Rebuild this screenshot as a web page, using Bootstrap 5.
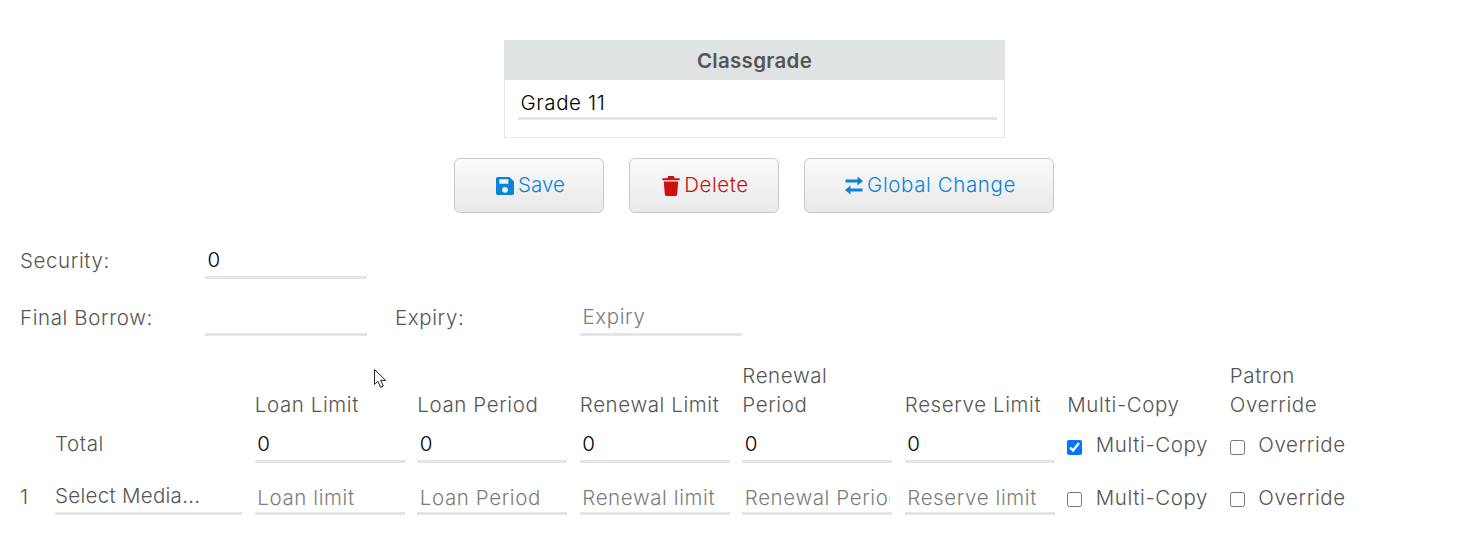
<!DOCTYPE html>
<html lang="en">
<head>
<meta charset="utf-8">
<title>Classgrade</title>
<link href="https://cdn.jsdelivr.net/npm/bootstrap@5.3.0/dist/css/bootstrap.min.css" rel="stylesheet">
<style>
html,body{height:552px;overflow:hidden;background:#fff}
body{font-family:Inter,"Liberation Sans",sans-serif;font-size:20.5px;font-weight:300;letter-spacing:.6px;color:#555;position:relative}
.page-wrap{padding:40px 0 0 20px}
.grade-card{width:501px;margin-left:484px;height:98px;border:1px solid #e6e6e6;border-top:0;border-radius:0}
.grade-head{height:40px;margin:0 -1px;background:#e0e3e4;color:#555;font-weight:600;text-align:center;line-height:42px;letter-spacing:.3px;padding:0;border:0;border-radius:0!important}
.grade-body{padding:2px 7px 0 13px}
.ul-input.form-control{height:38px;border:0;border-bottom:3px solid #e5e5e5;border-radius:0;padding:2px 2.500px 0;background:transparent;color:#000;font:inherit;letter-spacing:inherit;box-shadow:none}
.grade-body .ul-input.form-control,.grid-line .ul-input.form-control{padding-top:5px}
.ul-input.form-control::placeholder{color:#7d7d7d;opacity:1}
.act-row{margin:20px 0 0 434px;gap:25px}
.act-btn{height:55px;width:150px;border:1px solid #c9c9c9;border-radius:6px;background:linear-gradient(#fafafa,#e9e9e9);color:#0a84d8;font:inherit;letter-spacing:inherit;gap:4px;padding:0 0 0 3px}
.act-btn:hover{background:linear-gradient(#fafafa,#e9e9e9);color:#0a84d8;border-color:#c9c9c9}
.act-btn.act-del,.act-btn.act-del:hover{color:#cc0f0f}
.act-btn.act-wide{width:250px}
.act-btn.act-save{letter-spacing:.1px}
.act-btn svg{flex:none}
.field-row{height:38px;margin-top:19px}
.sec-row{margin-top:28px}
.field-lbl{width:185px;flex:none;padding-top:3px}
.field-in{width:162px;flex:none}
.lbl-exp{margin-left:28px;width:185px;flex:none;padding-top:3px}
.grid-row{display:grid;grid-template-columns:22.500px 187.300px repeat(5,150px) 150px auto;column-gap:12.500px;align-items:center}
.grid-head{margin-top:25px;height:58px;align-items:end;line-height:29px}
.grid-total{margin-top:6px;height:38px}
.grid-line{margin-top:14px;height:38px}
.row-lbl{padding-top:0}
.grid-line .row-lbl{padding-top:3px}
.check-cell{gap:13.500px;position:relative;top:1.500px}
.grid-line .check-cell{top:2px}
.check-cell input{width:15px;height:15px;margin:3px 0 0;flex:none;accent-color:#0075ff}
.media-sel.form-select{height:38px;border:0;border-bottom:3px solid #e5e5e5;border-radius:0;padding:4px 0 0;background:transparent none;color:#555;font:inherit;letter-spacing:.3px;box-shadow:none;margin-top:-1px;appearance:none}
.ptr{position:absolute;left:374px;top:369px}
</style>
</head>
<body>
<div class="page-wrap">
  <div class="card grade-card">
    <div class="card-header grade-head">Classgrade</div>
    <div class="card-body grade-body"><input class="form-control ul-input" value="Grade 11" aria-label="Classgrade"></div>
  </div>
  <div class="d-flex act-row">
    <button class="btn act-btn act-save d-flex align-items-center justify-content-center" type="button">
      <svg width="18" height="18" viewBox="1 1 16 16" aria-hidden="true"><path fill="currentColor" fill-rule="evenodd" d="M2.500 1H13l4 4v10.500A1.500 1.500 0 0 1 15.500 17h-13A1.500 1.500 0 0 1 1 15.500v-13A1.500 1.500 0 0 1 2.500 1zM4 3V7h8V3zM9 9.800a2.600 2.600 0 1 0 0 5.200 2.600 2.600 0 0 0 0-5.200z"/></svg>
      <span>Save</span>
    </button>
    <button class="btn act-btn act-del d-flex align-items-center justify-content-center" type="button">
      <svg width="18" height="20" viewBox="1 1 16 18.500" aria-hidden="true"><path fill="currentColor" d="M6.500 1h5l1 2H17v2H1V3h4.500zM2.300 6h13.400l-1 12.200A1.500 1.500 0 0 1 13.200 19.500H4.800a1.500 1.500 0 0 1-1.500-1.300z"/></svg>
      <span>Delete</span>
    </button>
    <button class="btn act-btn act-wide d-flex align-items-center justify-content-center" type="button">
      <svg width="18" height="19" viewBox=".5 1 18 18.200" aria-hidden="true"><path fill="currentColor" d="M13 1l5.500 4.600L13 10.200V7H1V4.200h12zM6 10v3.200h12V16H6v3.200L.5 14.600z"/></svg>
      <span>Global Change</span>
    </button>
  </div>
  <div class="d-flex align-items-center field-row sec-row">
    <label class="field-lbl" for="sec">Security:</label>
    <div class="field-in"><input id="sec" class="form-control ul-input" value="0"></div>
  </div>
  <div class="d-flex align-items-center field-row">
    <label class="field-lbl" for="fb">Final Borrow:</label>
    <div class="field-in"><input id="fb" class="form-control ul-input"></div>
    <label class="lbl-exp" for="exp">Expiry:</label>
    <div class="field-in"><input id="exp" class="form-control ul-input" placeholder="Expiry"></div>
  </div>
  <div class="grid-row grid-head">
    <div></div><div></div>
    <div>Loan Limit</div><div>Loan Period</div><div>Renewal Limit</div><div>Renewal<br>Period</div><div>Reserve Limit</div><div>Multi-Copy</div><div>Patron<br>Override</div>
  </div>
  <div class="grid-row grid-total">
    <div></div><div class="row-lbl">Total</div>
    <input class="form-control ul-input" value="0" aria-label="Loan Limit">
    <input class="form-control ul-input" value="0" aria-label="Loan Period">
    <input class="form-control ul-input" value="0" aria-label="Renewal Limit">
    <input class="form-control ul-input" value="0" aria-label="Renewal Period">
    <input class="form-control ul-input" value="0" aria-label="Reserve Limit">
    <label class="d-flex align-items-center check-cell"><input type="checkbox" checked>Multi-Copy</label>
    <label class="d-flex align-items-center check-cell"><input type="checkbox">Override</label>
  </div>
  <div class="grid-row grid-line">
    <div class="row-lbl">1</div>
    <select class="form-select media-sel" aria-label="Media"><option>Select Media...</option></select>
    <input class="form-control ul-input" placeholder="Loan limit">
    <input class="form-control ul-input" placeholder="Loan Period">
    <input class="form-control ul-input" placeholder="Renewal limit">
    <input class="form-control ul-input" placeholder="Renewal Period">
    <input class="form-control ul-input" placeholder="Reserve limit">
    <label class="d-flex align-items-center check-cell"><input type="checkbox">Multi-Copy</label>
    <label class="d-flex align-items-center check-cell"><input type="checkbox">Override</label>
  </div>
</div>
<svg class="ptr" width="14" height="20" viewBox="0 0 14 20" aria-hidden="true"><path fill="#fff" stroke="#222" stroke-width="1" d="M.5.5v15l3.500-3.200 2.600 6 2.700-1.200-2.600-5.700h5z"/></svg>
<script src="https://cdn.jsdelivr.net/npm/bootstrap@5.3.0/dist/js/bootstrap.bundle.min.js"></script>
</body>
</html>
